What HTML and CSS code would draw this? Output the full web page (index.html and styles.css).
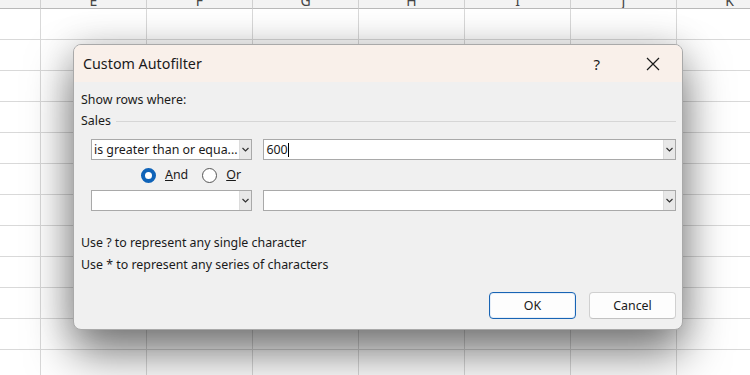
FILE: index.html
```html
<!DOCTYPE html>
<html lang="en">
<head>
  <meta charset="UTF-8" />
  <title>Custom Autofilter</title>
  <link rel="stylesheet" href="styles.css">
</head>
<body>
  <div class="sheet">
    <div class="sheet-row sheet-head">
      <div class="cell cell-num"></div>
      <div class="cell">E</div>
      <div class="cell">F</div>
      <div class="cell">G</div>
      <div class="cell">H</div>
      <div class="cell">I</div>
      <div class="cell">J</div>
      <div class="cell">K</div>
    </div>
    <div class="sheet-body" id="sheet-body"></div>
  </div>

  <div class="dialog">
    <div class="dialog-title">
      <span class="dialog-caption">Custom Autofilter</span>
      <span class="title-help">?</span>
      <svg class="title-close" width="14" height="14" viewBox="0 0 14 14">
        <path d="M1 1 L13 13 M13 1 L1 13" stroke="#1a1a1a" stroke-width="1.2" fill="none"/>
      </svg>
    </div>

    <div class="dialog-body">
      <div class="label-line">Show rows where:</div>
      <div class="group-line">
        <span>Sales</span>
        <span class="group-rule"></span>
      </div>

      <div class="cond-row">
        <div class="combo combo-op">
          <span class="combo-text">is greater than or equa...</span>
          <span class="combo-arrow"><svg width="7" height="5" viewBox="0 0 7 5"><path d="M0.5 1 L3.5 4 L6.5 1" stroke="#333" stroke-width="1.2" fill="none"/></svg></span>
        </div>
        <div class="combo combo-val">
          <span class="combo-text">600<span class="caret"></span></span>
          <span class="combo-arrow"><svg width="7" height="5" viewBox="0 0 7 5"><path d="M0.5 1 L3.5 4 L6.5 1" stroke="#333" stroke-width="1.2" fill="none"/></svg></span>
        </div>
      </div>

      <div class="radio-row">
        <span class="radio radio-on"></span>
        <span class="radio-label"><u>A</u>nd</span>
        <span class="radio"></span>
        <span class="radio-label"><u>O</u>r</span>
      </div>

      <div class="cond-row cond-row-2">
        <div class="combo combo-op">
          <span class="combo-text"></span>
          <span class="combo-arrow"><svg width="7" height="5" viewBox="0 0 7 5"><path d="M0.5 1 L3.5 4 L6.5 1" stroke="#333" stroke-width="1.2" fill="none"/></svg></span>
        </div>
        <div class="combo combo-val">
          <span class="combo-text"></span>
          <span class="combo-arrow"><svg width="7" height="5" viewBox="0 0 7 5"><path d="M0.5 1 L3.5 4 L6.5 1" stroke="#333" stroke-width="1.2" fill="none"/></svg></span>
        </div>
      </div>

      <div class="hint hint-first">Use ? to represent any single character</div>
      <div class="hint">Use * to represent any series of characters</div>

      <div class="button-row">
        <button class="btn btn-default">OK</button>
        <button class="btn">Cancel</button>
      </div>
    </div>
  </div>

  <script>
    // fill the worksheet with empty rows
    const body = document.getElementById('sheet-body');
    for (let r = 0; r < 12; r++) {
      const row = document.createElement('div');
      row.className = 'sheet-row';
      row.innerHTML = '<div class="cell cell-num"></div>' + '<div class="cell"></div>'.repeat(7);
      body.appendChild(row);
    }
  </script>
</body>
</html>
```

FILE: styles.css
```css
body {
  margin: 0;
  background: #ffffff;
  font-family: 'Noto Sans', 'Open Sans', sans-serif;
  color: #1a1a1a;
  overflow: hidden;
}

/* worksheet behind the dialog */

.sheet {
  width: 750px;
  height: 375px;
  overflow: hidden;
}

.sheet-row {
  display: flex;
  height: 31px;
}

.cell {
  flex: 0 0 106px;
  box-sizing: border-box;
  border-right: 1px solid #d9d9d9;
  border-bottom: 1px solid #d9d9d9;
}

.cell-num {
  flex-basis: 41px;
}

.sheet-head {
  height: 9px;
  background: #f3f3f3;
}

.sheet-head .cell {
  border-bottom-color: #b9b9b9;
  border-right-color: #d0d0d0;
  font-size: 14px;
  line-height: 14px;
  overflow: hidden;
  display: flex;
  align-items: flex-end;
  justify-content: center;
  color: #444;
}

/* dialog */

.dialog {
  position: absolute;
  left: 73px;
  top: 44px;
  width: 608px;
  height: 284px;
  border: 1px solid #a9a9a9;
  border-radius: 8px;
  background: #f0f0f0;
  overflow: hidden;
  box-shadow: 0 24px 46px rgba(0, 0, 0, 0.5), 0 0 36px rgba(0, 0, 0, 0.16);
}

.dialog-title {
  height: 37px;
  background: #f9f0ea;
  display: flex;
  align-items: center;
  padding-left: 9px;
}

.dialog-caption {
  font-size: 14.3px;
  flex: 1;
}

.title-help {
  font-size: 15px;
  margin-right: 46px;
}

.title-close {
  margin-right: 22px;
}

.dialog-body {
  padding: 10px 6px 10px 7px;
  font-size: 12.4px;
  line-height: 16px;
}

.group-line {
  display: flex;
  align-items: center;
  margin-top: 5px;
}

.group-rule {
  flex: 1;
  height: 1px;
  background: #d6d6d6;
  margin-left: 5px;
}

.cond-row {
  display: flex;
  margin-top: 10px;
  margin-left: 10px;
  gap: 11px;
}

.cond-row-2 {
  margin-top: 7px;
}

.combo {
  box-sizing: border-box;
  height: 21px;
  border: 1px solid #a9a9a9;
  background: #ffffff;
  display: flex;
  align-items: stretch;
}

.combo-op {
  width: 162px;
}

.combo-val {
  width: 414px;
}

.combo-text {
  flex: 1;
  padding-left: 2px;
  line-height: 19px;
  white-space: nowrap;
  overflow: hidden;
  display: flex;
  align-items: center;
}

.caret {
  display: inline-block;
  width: 1px;
  height: 14px;
  background: #000;
}

.combo-arrow {
  width: 11px;
  background: #e8e8e8;
  border-left: 1px solid #dcdcdc;
  display: flex;
  align-items: center;
  justify-content: center;
}

.radio-row {
  display: flex;
  align-items: center;
  margin-top: 7px;
  margin-left: 60px;
  height: 16px;
}

.radio {
  box-sizing: border-box;
  width: 15px;
  height: 15px;
  border-radius: 50%;
  border: 1px solid #555;
  background: #fff;
  margin-right: 9px;
}

.radio-on {
  border: 4.5px solid #0f63b8;
  background: #fff;
}

.radio-label {
  margin-right: 14px;
}

.hint {
  margin-top: 6px;
}

.hint-first {
  margin-top: 24px;
}

.button-row {
  display: flex;
  justify-content: flex-end;
  gap: 13px;
  margin-top: 19px;
}

.btn {
  box-sizing: border-box;
  width: 87px;
  height: 27px;
  border: 1px solid #d0d0d0;
  border-bottom-color: #c2c2c2;
  border-radius: 4px;
  background: #fdfdfd;
  font-family: 'Noto Sans', 'Open Sans', sans-serif;
  font-size: 12.4px;
  color: #1a1a1a;
  padding: 0;
}

.btn-default {
  border: 1px solid #1864b4;
  box-shadow: inset 0 0 0 1px #e6eef8;
}
```
